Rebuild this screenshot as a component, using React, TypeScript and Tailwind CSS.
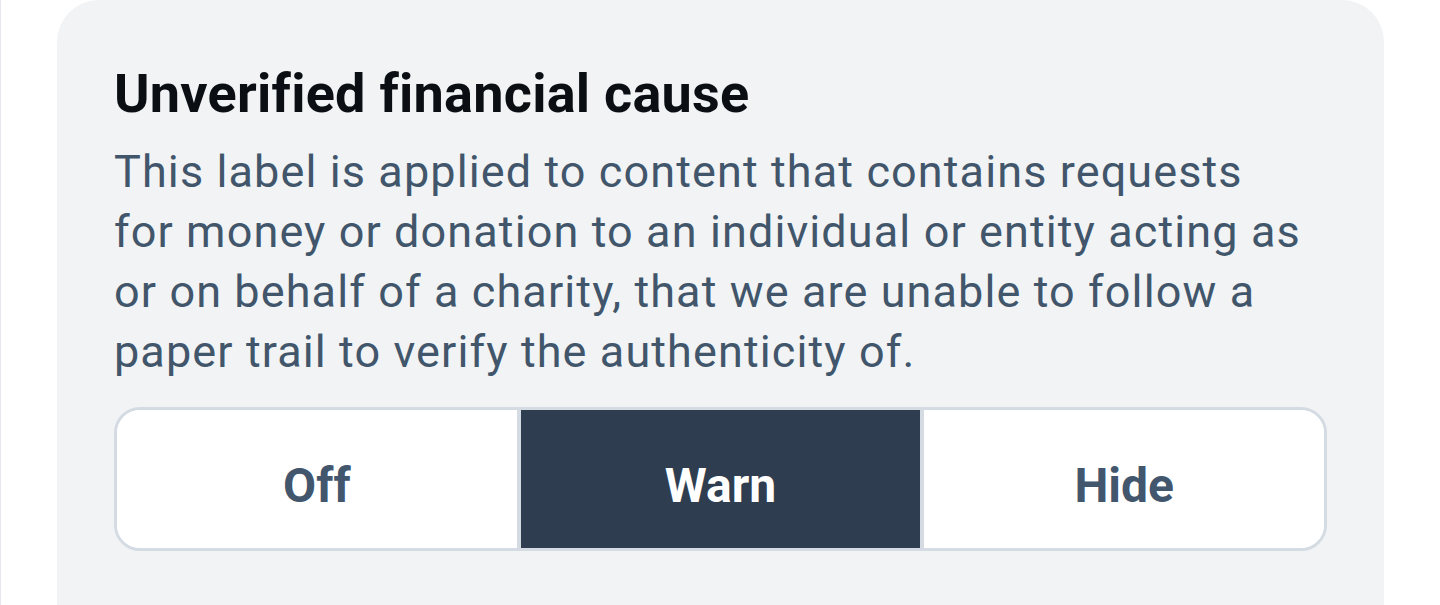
const options = ['Off', 'Warn', 'Hide']

function LabelSetting() {
  const selected = 'Warn'
  return (
    <div className="ml-[56px] w-[1327px] min-h-[605px] rounded-t-[42px] bg-[#f1f3f5] px-[57px] pt-[62px]">
      <h2 className="text-[54px] leading-[63px] font-bold tracking-[0.25px] text-[#0b0f14]">
        Unverified financial cause
      </h2>
      <p className="mt-[17px] max-w-[1195px] text-[45px] leading-[60px] tracking-[1.1px] text-[#42566b]">
        This label is applied to content that contains requests for money or
        donation to an individual or entity acting as or on behalf of a charity,
        that we are unable to follow a paper trail to verify the authenticity of.
      </p>
      <div className="mt-[25px] flex h-[144px] overflow-hidden rounded-[26px] border-[3px] border-[#d4dbe3] bg-white">
        {options.map((opt, i) => (
          <button
            key={opt}
            className={
              (i > 0 ? 'border-l-[4px] border-[#d4dbe3] ' : '') +
              (opt === selected
                ? 'bg-[#2e3e50] text-white '
                : 'bg-white text-[#42566d] ') +
              'flex-1 pt-[14px] text-[48px] font-bold'
            }
          >
            {opt}
          </button>
        ))}
      </div>
    </div>
  )
}

export default function App() {
  return (
    <div
      className="h-[605px] w-[1440px] overflow-hidden border-l border-[#e4e7eb] bg-white"
      style={{ fontFamily: 'Roboto, sans-serif' }}
    >
      <LabelSetting />
    </div>
  )
}
